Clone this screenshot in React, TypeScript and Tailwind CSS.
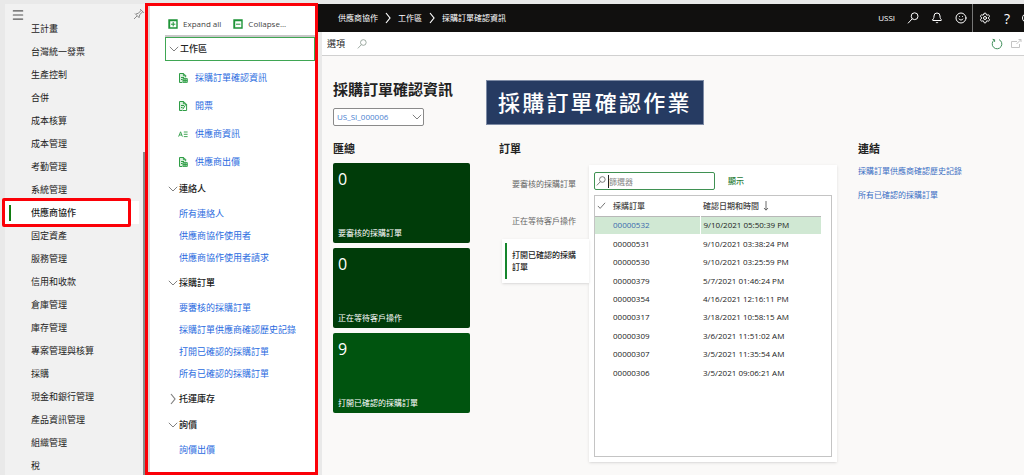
import type { ReactNode } from "react";
import { Bell, Menu, Settings, Smile } from "lucide-react";

const modules = [
  "王計畫",
  "台灣統一發票",
  "生產控制",
  "合併",
  "成本核算",
  "成本管理",
  "考勤管理",
  "系統管理",
  "供應商協作",
  "固定資產",
  "服務管理",
  "信用和收款",
  "倉庫管理",
  "庫存管理",
  "專案管理與核算",
  "採購",
  "現金和銀行管理",
  "產品資訊管理",
  "組織管理",
  "稅",
];

const orders = [
  ["00000532", "9/10/2021 05:50:39 PM"],
  ["00000531", "9/10/2021 03:38:24 PM"],
  ["00000530", "9/10/2021 03:25:59 PM"],
  ["00000379", "5/7/2021 01:46:24 PM"],
  ["00000354", "4/16/2021 12:16:11 PM"],
  ["00000317", "3/18/2021 10:58:15 AM"],
  ["00000309", "3/6/2021 11:51:02 AM"],
  ["00000307", "3/5/2021 11:35:54 AM"],
  ["00000306", "3/5/2021 09:06:21 AM"],
];

const tiles = [
  { count: 0, label: "要審核的採購訂單", color: "bg-[#003c09]" },
  { count: 0, label: "正在等待客戶操作", color: "bg-[#003c09]" },
  { count: 9, label: "打開已確認的採購訂單", color: "bg-[#00540f]" },
];

const workspaces = [
  { label: "採購訂單確認資訊", icon: "doc" },
  { label: "開票", icon: "invoice" },
  { label: "供應商資訊", icon: "person" },
  { label: "供應商出價", icon: "doc" },
];

const SearchIcon = ({ className }: { className?: string }) => (
  <svg viewBox="0 0 12 12" fill="none" stroke="currentColor" className={className} aria-hidden="true">
    <circle cx="7.6" cy="4.2" r="3.4" />
    <path d="M5.2 6.8 1 11.3" />
  </svg>
);

const PinIcon = () => (
  <svg viewBox="0 0 12 12" fill="none" stroke="#8a8a8a" className="size-3" aria-hidden="true">
    <path d="M1 11 4 8M2 5.5 6.5 10M3 6l2.5-.8L8 2.5 7.5 1.5M6 9.3l.8-2.8L9.5 4l1 .5M7.3 1.2l3.5 3.5" />
  </svg>
);

const ArrowDown = ({ className }: { className?: string }) => (
  <svg viewBox="0 0 10 6" fill="none" stroke="#808080" className={`h-1.5 w-[10px] ${className ?? ""}`} aria-hidden="true">
    <path d="m.8.8 4.2 4.2L9.2.8" />
  </svg>
);

const ArrowRight = ({ className }: { className?: string }) => (
  <svg viewBox="0 0 6 12" fill="none" stroke="currentColor" className={`h-3 w-1.5 ${className ?? ""}`} aria-hidden="true">
    <path d="m1 1 4 5-4 5" strokeWidth="1.2" />
  </svg>
);

const ToggleBox = ({ plus }: { plus?: boolean }) => (
  <svg viewBox="0 0 10 10" fill="none" stroke="#1f9438" className="size-[10px]" aria-hidden="true">
    <path d="M1 1h8v8H1z" strokeWidth="1.4" />
    <path d="M1 1.6h8M1.6 1v8" strokeWidth="1.2" />
    <path d={plus ? "M3 5.2h4.4M5.2 3v4.4" : "M3 5.2h4.4"} />
  </svg>
);

const WorkspaceIcon = ({ kind }: { kind: string }) => (
  <svg viewBox="0 0 10 12" fill="none" stroke="#2f9d46" className="h-3 w-[10px]" aria-hidden="true">
    {kind === "person" ? (
      <path d="M.6 8.6 2.6 3.8 4.4 8.6M1.3 7h2.5M5.8 4h3.8M5.8 6.3h3.8M5.8 8.6h3.8" strokeWidth=".9" />
    ) : (
      <>
        <path d="M4.4 10.5H1.5v-9h4.2l2 2v1.8M5.4 1.5v2.2h2.3" fill="#d9f0dd" />
        <path d="M3 5.5h3M3 7.5h1.5" />
        {kind === "invoice" ? (
          <path d="M8.6 4v6.5H4.8M7.2 5.6 4.8 9.2" />
        ) : (
          <path d="M5 6.6h4.3v3.8H5zM7.1 6.6v3.8M5 8.5h4.3" fill="#a8dab2" strokeWidth=".9" />
        )}
      </>
    )}
  </svg>
);

const Group = ({ title, closed, children }: { title: string; closed?: boolean; children?: ReactNode }) => (
  <section>
    <button type="button" className="flex h-[26px] items-center gap-px pl-5 text-[9px] font-medium text-[#222]">
      {closed ? (
        <span className="flex w-[10px] justify-center text-[#808080]">
          <ArrowRight />
        </span>
      ) : (
        <ArrowDown />
      )}
      {title}
    </button>
    {children}
  </section>
);

const MenuLinks = ({ items }: { items: string[] }) => (
  <ul className="py-px pl-[31px]">
    {items.map((item) => (
      <li key={item} className="flex h-[22px] items-center">
        <a href="#" className="text-[9px] text-[#2a6be0]">{item}</a>
      </li>
    ))}
  </ul>
);

const App = () => {
  return (
    <div className="flex h-screen overflow-hidden bg-[#e9e9e9] pt-1 font-['Open_Sans','Noto_Sans_CJK_TC',sans-serif] text-[#222]">
      {/* Module list */}
      <nav className="relative ml-[5px] w-[140px] shrink-0 bg-[#f1f1f1]">
        <div className="flex h-[13px] items-start justify-between pt-1 pl-[5px]">
          <button type="button" aria-label="功能表" className="pl-px">
            <Menu className="size-[14px] text-[#555]" strokeWidth={2} />
          </button>
          <PinIcon />
        </div>
        <ul>
          {modules.map((name) =>
            name === "供應商協作" ? (
              <li key={name} className="relative mr-1.5 flex h-[23px] items-center bg-white pl-[26px] text-[9px] font-medium">
                <span className="absolute left-1 h-4 w-[2px] bg-[#107c10]" />
                <a href="#">{name}</a>
                {/* Highlight frame */}
                <span className="absolute -top-[3px] right-[8px] -bottom-[3px] -left-[3px] rounded-xs border-[3px] border-[#fb0007]" />
              </li>
            ) : (
              <li key={name} className="flex h-[23px] items-center pl-[26px] text-[9px]">
                <a href="#">{name}</a>
              </li>
            )
          )}
        </ul>
        <span className="absolute top-[148px] right-0 bottom-0 w-[2px] bg-[#8a8a8a]" />
      </nav>

      {/* Module menu */}
      <nav className="-mt-px w-[173px] shrink-0 border-[3px] border-[#fb0007] bg-white shadow-[inset_2px_0_0_#d9d9d9]">
        <div className="ml-[17px] flex h-[31px] items-center gap-3 border-b-2 border-[#c8c8c8] pt-1.5 pl-[3px] text-[8px] text-[#444]">
          <button type="button" className="flex items-center gap-[5px]">
            <ToggleBox plus />
            Expand all
          </button>
          <button type="button" className="flex items-center gap-[5px]">
            <ToggleBox />
            Collapse...
          </button>
        </div>
        <section>
          <button type="button" className="ml-[17px] flex h-6 w-[150px] items-center gap-px border border-[#3fa653] pl-[3px] text-[9px] font-medium">
            <ArrowDown />
            工作區
          </button>
          <ul className="pt-[3px] pl-[30px]">
            {workspaces.map(({ label, icon }) => (
              <li key={label} className="flex h-[28px] items-center">
                <a href="#" className="flex items-center gap-[7px] text-[9px] text-[#2a6be0]">
                  <WorkspaceIcon kind={icon} />
                  {label}
                </a>
              </li>
            ))}
          </ul>
        </section>
        <Group title="連絡人">
          <MenuLinks items={["所有連絡人", "供應商協作使用者", "供應商協作使用者請求"]} />
        </Group>
        <Group title="採購訂單">
          <MenuLinks
            items={["要審核的採購訂單", "採購訂單供應商確認歷史記錄", "打開已確認的採購訂單", "所有已確認的採購訂單"]}
          />
        </Group>
        <Group title="托運庫存" closed />
        <Group title="詢價">
          <MenuLinks items={["詢價出價"]} />
        </Group>
      </nav>

      <div className="flex min-w-0 flex-1 flex-col">
        {/* Top bar */}
        <header className="flex h-7 shrink-0 items-center justify-between overflow-hidden bg-[#11100f] pl-5 text-white">
          <nav className="flex items-center gap-[7px] text-[8px]">
            <a href="#">供應商協作</a>
            <ArrowRight />
            <a href="#">工作區</a>
            <ArrowRight />
            <a href="#">採購訂單確認資訊</a>
          </nav>
          <div className="flex h-full items-center">
            <span className="pr-3 text-[8px]">USSI</span>
            <button type="button" aria-label="搜尋" className="w-6">
              <SearchIcon className="size-3" />
            </button>
            <button type="button" aria-label="通知" className="w-6">
              <Bell className="size-3" strokeWidth={2} />
            </button>
            <button type="button" aria-label="意見反應" className="w-[17px]">
              <Smile className="size-3" strokeWidth={2} />
            </button>
            <span className="h-full w-px bg-[#777]" />
            <button type="button" aria-label="設定" className="ml-1.5 w-[25px]">
              <Settings className="size-3" strokeWidth={2} />
            </button>
            <button type="button" className="w-[18px] text-left text-[14px]">?</button>
            <span className="-mr-2 size-[10px] rounded-full border border-white" />
          </div>
        </header>

        <div className="ml-1 flex min-h-0 flex-1 flex-col bg-[#faf9f8]">
          <div className="flex h-6 shrink-0 items-center border-b border-[#d0d0d0] bg-white pr-[2px] pl-[5px]">
            <button type="button" className="text-[9px]">選項</button>
            <button type="button" aria-label="搜尋" className="ml-3">
              <SearchIcon className="size-[10px] text-[#8a9a90]" />
            </button>
            <button type="button" aria-label="重新整理" className="ml-auto">
              <svg viewBox="0 0 12 12" fill="none" stroke="#3f8f5a" className="size-3">
                <path d="M8 1.6A4.8 4.8 0 1 1 3.2 2.1M1.6 1.3l2 .4v2.2" />
              </svg>
            </button>
            <button type="button" aria-label="在新視窗開啟" className="ml-[7px]">
              <svg viewBox="0 0 12 12" fill="none" stroke="#c4c4c4" className="size-3">
                <path d="M7 3.5H1.5v6h8V6M6.5 6 11 1.5M8.5 1.5H11V4" />
              </svg>
            </button>
          </div>

          <main className="pt-6 pl-[11px]">
            <div className="flex items-start gap-[31px]">
              <div className="w-[122px]">
                <h1 className="text-[15px] leading-[18px] font-semibold whitespace-nowrap">採購訂單確認資訊</h1>
                <div className="relative mt-[10px] w-[91px]">
                  <select
                    aria-label="供應商帳戶"
                    className="block h-[18px] w-full appearance-none rounded-xs border border-[#8a8a8a] bg-white pl-[3px] text-[8px] text-[#4a7fd0]"
                  >
                    <option>US_SI_000006</option>
                  </select>
                  <ArrowDown className="pointer-events-none absolute top-1.5 right-0.5" />
                </div>
              </div>
              <div className="flex h-[45px] items-center border border-[#7d8ba5] bg-[#263b62] px-[11px] text-[22px] font-medium tracking-widest text-white">
                採購訂單確認作業
              </div>
            </div>

            <div className="mt-[15px] flex items-start">
              {/* Summary tiles */}
              <section className="w-[137px] shrink-0">
                <h2 className="h-[22px] text-[11px] leading-4 font-semibold">匯總</h2>
                <div className="flex flex-col gap-[5px]">
                  {tiles.map((tile) => (
                    <button
                      key={tile.label}
                      type="button"
                      className={`${tile.color} flex h-20 flex-col items-start justify-between rounded-xs px-[5px] pt-1 pb-[3px] text-white`}
                    >
                      <span className="text-[16px] leading-6">{tile.count}</span>
                      <span className="text-[8px] leading-[14px]">{tile.label}</span>
                    </button>
                  ))}
                </div>
              </section>

              {/* Orders */}
              <section className="ml-[29px] min-w-0 flex-1">
                <h2 className="h-[24px] text-[11px] leading-4 font-semibold">訂單</h2>
                <div className="flex items-start">
                  <div className="ml-[3px] w-[87px] shrink-0 text-[8px] text-[#666]">
                    <button type="button" className="flex h-[37px] items-center pl-[10px]">要審核的採購訂單</button>
                    <button type="button" className="flex h-[37px] items-center pl-[10px]">正在等待客戶操作</button>
                    <button
                      type="button"
                      className="relative flex h-11 w-full items-center bg-white pl-[10px] text-left text-[8px] leading-3 font-medium text-[#222] shadow-sm"
                    >
                      <span className="absolute top-1 left-[3px] h-9 w-[2px] bg-[#15862d]" />
                      <span className="w-[68px]">打開已確認的採購訂單</span>
                    </button>
                  </div>
                  <div className="min-w-0 flex-1 bg-white px-[5px] pt-[7px] pb-[5px] shadow-sm">
                    <div className="flex items-center gap-[13px]">
                      <label className="relative flex h-[18px] w-[121px] items-center rounded-xs border border-[#3f9152] pl-px">
                        <SearchIcon className="size-[10px] text-[#666]" />
                        <input
                          aria-label="篩選器"
                          placeholder="篩選器"
                          className="ml-0.5 h-[13px] w-[100px] border-l border-[#222] text-[8px] outline-none placeholder:text-[#888]"
                        />
                      </label>
                      <button type="button" className="text-[8px] font-medium text-[#1f7a37]">顯示</button>
                    </div>
                    <div className="mt-[5px] h-[262px] border border-[#c4c4c4] pr-[10px]">
                      <table className="h-[186px] w-full table-fixed text-left text-[8px] leading-none">
                        <thead>
                          <tr className="h-5 border-b border-[#b8b8b8] text-[#444]">
                            <th className="w-[18px] font-normal">
                              <svg viewBox="0 0 10 10" fill="none" stroke="#666" className="ml-0.5 size-[9px]">
                                <path d="m1 5.5 2.5 2.7L9 2" />
                              </svg>
                            </th>
                            <th className="w-[87px] font-medium">採購訂單</th>
                            <th className="pl-[3px] font-medium">
                              <span className="flex items-center gap-1">
                                確認日期和時間
                                <svg viewBox="0 0 6 10" fill="none" stroke="#444" strokeWidth=".8" className="h-[10px] w-1.5">
                                  <path d="M3 0v9M1 7l2 2.2L5 7" />
                                </svg>
                              </span>
                            </th>
                          </tr>
                        </thead>
                        <tbody>
                          {orders.map(([id, date], i) => (
                            <tr key={id} className={i === 0 ? "h-[18px] bg-[#d0e8d3]" : "h-[18px]"}>
                              <td />
                              <td>
                                {i === 0 ? <a href="#" className="text-[#3b68ad]">{id}</a> : id}
                              </td>
                              <td className={i === 0 ? "border-l border-white pl-[3px]" : "pl-[3px]"}>{date}</td>
                            </tr>
                          ))}
                        </tbody>
                      </table>
                    </div>
                  </div>
                </div>
              </section>

              {/* Links */}
              <section className="ml-[21px] w-[166px] shrink-0">
                <h2 className="h-[18px] text-[11px] leading-4 font-semibold">連結</h2>
                <ul className="text-[8px] text-[#3a6fc4]">
                  <li className="flex h-6 items-center"><a href="#">採購訂單供應商確認歷史記錄</a></li>
                  <li className="flex h-6 items-center"><a href="#">所有已確認的採購訂單</a></li>
                </ul>
              </section>
            </div>
          </main>
        </div>
      </div>
    </div>
  );
};

export default App;
